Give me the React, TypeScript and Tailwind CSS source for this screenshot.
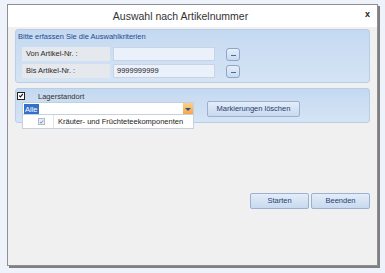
import React from "react";

const font = { fontFamily: "'Liberation Sans', Arial, sans-serif" };

function DotsButton() {
    return (
        <div className="ml-[11px] w-[14px] h-[13px] rounded-[3px] border border-[#8ea6c6] bg-gradient-to-b from-[#e6eef9] to-[#c9daf0] flex items-center justify-center">
            <div className="w-[5px] h-[1px] bg-[#4a6a9a] mt-[2px]" />
        </div>
    );
}

function FieldRow({ label, value }: { label: string; value: string }) {
    return (
        <div className="flex items-center">
            <div className="w-[88px] h-[14px] bg-[#e5e8ec] text-[7.5px] text-[#2a2a2a] pl-[4px] leading-[14px]">
                {label}
            </div>
            <div className="ml-[3px] w-[102px] h-[14px] bg-[#eaf1fb] border border-[#c8d4e4] text-[7.5px] text-[#1a1a1a] pl-[3px] leading-[12px]">
                {value}
            </div>
            <DotsButton />
        </div>
    );
}

function Check({ className }: { className: string }) {
    return (
        <svg viewBox="0 0 8 8" className={className}>
            <path d="M1.5 4 L3.2 5.8 L6.5 1.8" fill="none" stroke="currentColor" strokeWidth="1.4" />
        </svg>
    );
}

function Btn({ label, className }: { label: string; className: string }) {
    return (
        <div
            className={`h-[16px] rounded-[2px] border border-[#9bb1cf] bg-gradient-to-b from-[#e4edf9] to-[#c8d9ef] text-[7.5px] text-[#1f3f6f] flex items-center justify-center whitespace-nowrap ${className}`}
        >
            {label}
        </div>
    );
}

export default function App() {
    return (
        <div className="w-[385px] h-[273px] bg-[#eef3fb] pt-[4px] pl-[7px]" style={font}>
            <div className="w-[371px] h-[262px] border border-[#8f8f8f] shadow-[2px_2px_0_#7f7f7f] bg-[#f0f0f0] flex flex-col">
                <div className="h-[22px] bg-white relative flex items-center justify-center">
                    <span className="text-[10.5px] text-[#333] leading-none mt-[1px] ml-[-24px]">Auswahl nach Artikelnummer</span>
                    <span className="absolute right-[7px] top-[5px] text-[9px] font-bold text-[#222] leading-none">x</span>
                </div>
                <div className="px-[7px] pt-[2px] flex flex-col">
                    <div className="h-[54px] rounded-[3px] border border-[#b7cde8] bg-gradient-to-b from-[#c4d9f1] to-[#d5e4f5] pl-[2px] pt-[1px]">
                        <div className="text-[7.5px] text-[#1e4a8f] leading-[10px] pt-[1px]">Bitte erfassen Sie die Auswahlkriterien</div>
                        <div className="pl-[4px] mt-[5px] flex flex-col gap-[3px]">
                            <FieldRow label="Von Artikel-Nr. :" value="" />
                            <FieldRow label="Bis Artikel-Nr. :" value="9999999999" />
                        </div>
                    </div>
                    <div className="mt-[5px] h-[35px] rounded-[3px] border border-[#b7cde8] bg-gradient-to-b from-[#c4d9f1] to-[#d5e4f5] relative">
                        <div className="flex items-center h-[12px] pl-[1px] pt-[1px]">
                            <div className="w-[8px] h-[8px] bg-white border border-[#222] text-[#111] flex items-center justify-center">
                                <Check className="w-[7px] h-[7px]" />
                            </div>
                            <span className="ml-[13px] text-[7.5px] text-[#333] leading-none mt-[3px]">Lagerstandort</span>
                        </div>
                        <div className="flex items-center pl-[6px]">
                            <div className="w-[172px] h-[14px] bg-white border border-[#c0cfe2] flex items-center">
                                <span className="ml-[1px] px-[1px] bg-[#3370c8] text-white text-[7.5px] leading-[11px]">Alle</span>
                                <div className="ml-auto w-[10px] h-[12px] bg-gradient-to-b from-[#fbd08a] to-[#f3a53c] flex items-center justify-center">
                                    <div className="w-0 h-0 border-l-[3px] border-r-[3px] border-t-[3px] border-l-transparent border-r-transparent border-t-[#2f4f8f]" />
                                </div>
                            </div>
                            <Btn label="Markierungen löschen" className="ml-[13px] w-[93px] h-[15px]" />
                        </div>
                        <div className="absolute left-[6px] top-[25px] w-[172px] h-[15px] bg-white border border-[#c8d0da] flex items-center">
                            <div className="w-[31px] h-full flex items-center justify-center border-r border-[#e0e4ea]">
                                <div className="w-[7px] h-[7px] bg-[#e4ebf5] border border-[#b0bccc] text-[#6d84ad] flex items-center justify-center ml-[6px]">
                                    <Check className="w-[6px] h-[6px]" />
                                </div>
                            </div>
                            <span className="ml-[4px] text-[7.5px] text-[#222] leading-none whitespace-nowrap">Kräuter- und Früchteteekomponenten</span>
                        </div>
                    </div>
                    <div className="mt-[70px] flex justify-end gap-[2px]">
                        <Btn label="Starten" className="w-[59px]" />
                        <Btn label="Beenden" className="w-[59px]" />
                    </div>
                </div>
            </div>
        </div>
    );
}
